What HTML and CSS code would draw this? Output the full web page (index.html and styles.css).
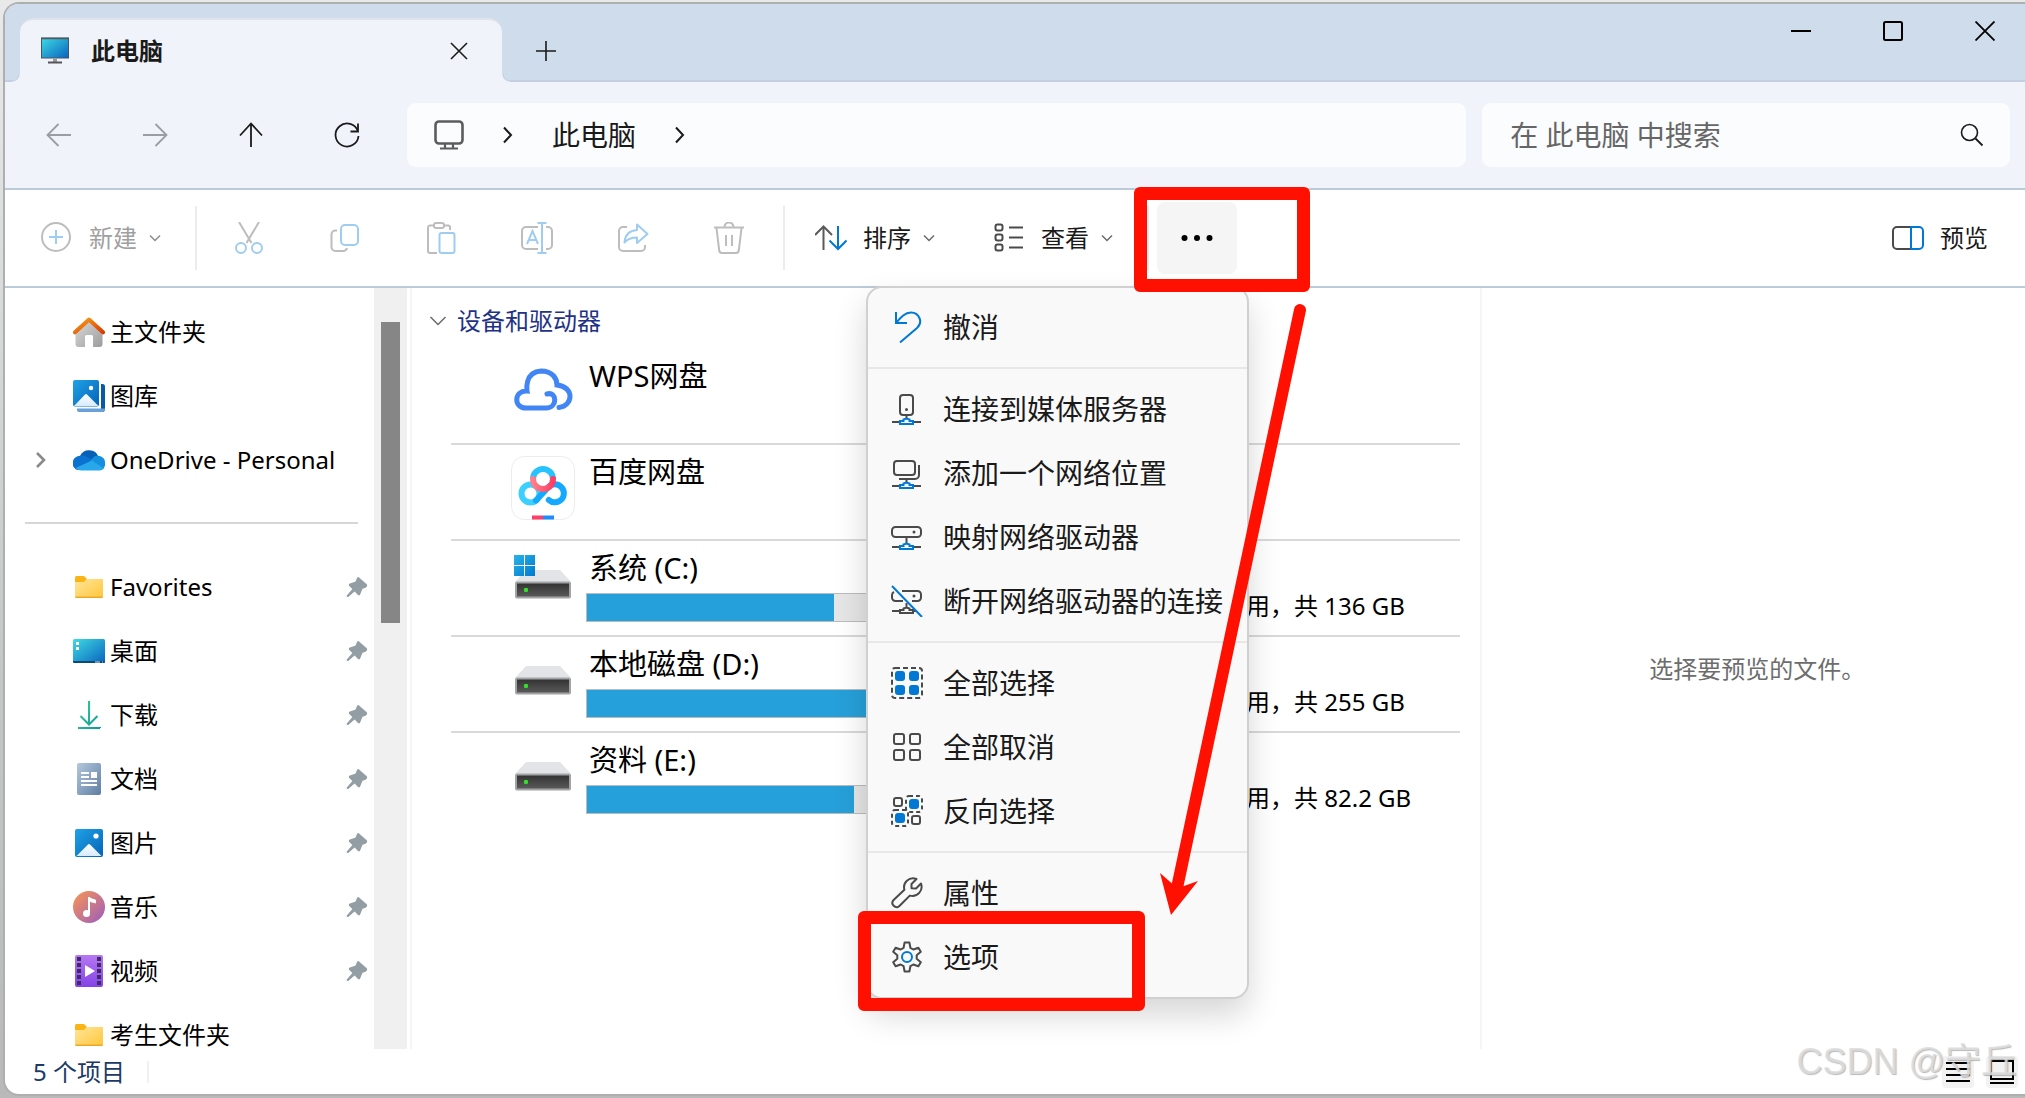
FILE: index.html
```html
<!DOCTYPE html>
<html lang="zh-CN">
<head>
<meta charset="utf-8">
<title>此电脑</title>
<meta name="viewport" content="width=device-width, initial-scale=1">
<link rel="stylesheet" href="styles.css">
</head>
<body>
<svg class="defs" width="0" height="0" aria-hidden="true">
  <defs>
    <linearGradient id="g-screen" x1="0" y1="0" x2="1" y2="1"><stop offset="0" stop-color="#3ddbe4"/><stop offset="1" stop-color="#0a63bd"/></linearGradient>
    <linearGradient id="g-folder" x1="0" y1="0" x2="1" y2="1"><stop offset="0" stop-color="#ffe59a"/><stop offset="1" stop-color="#ffc73a"/></linearGradient>
    <linearGradient id="g-photo" x1="0" y1="0" x2="1" y2="1"><stop offset="0" stop-color="#1fa2e6"/><stop offset="1" stop-color="#0563b8"/></linearGradient>
    <linearGradient id="g-snow" x1="0" y1="0" x2="0" y2="1"><stop offset="0" stop-color="#fff"/><stop offset="1" stop-color="#d6ebff"/></linearGradient>
    <linearGradient id="g-roof" x1="0" y1="0" x2="1" y2="1"><stop offset="0" stop-color="#f9a01b"/><stop offset="1" stop-color="#d83b01"/></linearGradient>
    <linearGradient id="g-wall" x1="0" y1="0" x2="1" y2="1"><stop offset="0" stop-color="#dcdcdc"/><stop offset="1" stop-color="#9c9c9c"/></linearGradient>
    <linearGradient id="g-down" x1="0" y1="0" x2="1" y2="1"><stop offset="0" stop-color="#3ccf91"/><stop offset="1" stop-color="#0c9aa0"/></linearGradient>
    <linearGradient id="g-doc" x1="0" y1="0" x2="1" y2="1"><stop offset="0" stop-color="#b4c8dc"/><stop offset="1" stop-color="#5f7ea4"/></linearGradient>
    <linearGradient id="g-music" x1="0" y1="0" x2="1" y2="1"><stop offset="0.1" stop-color="#f2905c"/><stop offset="1" stop-color="#9a5cc0"/></linearGradient>
    <linearGradient id="g-video" x1="0" y1="0" x2="0" y2="1"><stop offset="0" stop-color="#b678f2"/><stop offset="1" stop-color="#8443e6"/></linearGradient>
    <linearGradient id="g-drive" x1="0" y1="0" x2="0" y2="1"><stop offset="0" stop-color="#303030"/><stop offset="1" stop-color="#5c5c5c"/></linearGradient>
    <linearGradient id="g-pan-c" x1="0" y1="0" x2="1" y2="0"><stop offset="0" stop-color="#ff7f8c"/><stop offset="1" stop-color="#ff3d65"/></linearGradient>
    <linearGradient id="g-win" x1="0" y1="0" x2="1" y2="1"><stop offset="0" stop-color="#28b4ea"/><stop offset="1" stop-color="#0078d0"/></linearGradient>
  </defs>
  <symbol id="pin" viewBox="0 0 22 22"><path d="M12.500 1 21 8.600c.6 1.800-.6 3.200-2.200 3.400l-2.300.8-2.600 6.200c-1 .8-2 .2-2.400-.4l-2.900-3L2.200 21H.8v-1.600l5.600-6.300L3.200 10c-.8-1-.3-2 .6-2.400l5.600-1.800 1.400-3.200C11.200 1.600 11.800 1 12.500 1z" fill="#929da4"/></symbol>
  <symbol id="folder" viewBox="0 0 32 32"><path d="M2 6.500Q2 5 3.500 5H11l3 3-3 4H2z" fill="#fbb416"/><path d="M2 11h9l3-3h16v17.500Q30 27 28.500 27h-25Q2 27 2 25.500z" fill="url(#g-folder)"/><path d="M2.500 26.300h27" stroke="#e8a624" stroke-width="1.400"/></symbol>
  <symbol id="drive" viewBox="0 0 64 48"><path d="M15 18h34l11 12H4z" fill="#e2e4e8"/><rect x="5" y="30.500" width="54" height="15" rx="1" fill="url(#g-drive)" stroke="#a3a3a5" stroke-width="2"/><circle cx="15" cy="38" r="2.200" fill="#35e22b"/></symbol>
  <symbol id="chev-down" viewBox="0 0 12 8"><path d="m1 1.500 5 5 5-5" fill="none" stroke="currentColor" stroke-width="1.500"/></symbol>
  <symbol id="chev-right" viewBox="0 0 12 20"><path d="m2 2.500 7 7.500-7 7.500" fill="none" stroke="currentColor" stroke-width="2"/></symbol>
</svg>

<div class="window">
  <header class="titlebar">
    <div class="tab">
      <svg class="tab-icon" viewBox="0 0 28 28"><rect x=".5" y="1" width="27" height="20" fill="url(#g-screen)" stroke="#4a5560"/><path d="M0 1.500h28" stroke="#51585e" stroke-width="1.500"/><path d="M12 21.500h4v3.500h-4z" fill="#999"/><path d="M7 25.500h14" stroke="#555" stroke-width="2"/></svg>
      <span class="tab-title">此电脑</span>
      <button class="icon-btn tab-close" aria-label="关闭标签页"><svg width="18" height="18" viewBox="0 0 18 18"><path d="m1 1 16 16M17 1 1 17" stroke="#1a1a1a" stroke-width="1.600"/></svg></button>
    </div>
    <button class="icon-btn new-tab" aria-label="新标签页"><svg width="20" height="20" viewBox="0 0 20 20"><path d="M10 0v20M0 10h20" stroke="#1a1a1a" stroke-width="1.600"/></svg></button>
    <div class="caption">
      <button class="icon-btn" aria-label="最小化"><svg width="20" height="20" viewBox="0 0 20 20"><path d="M0 10h20" stroke="#000" stroke-width="2"/></svg></button>
      <button class="icon-btn" aria-label="最大化"><svg width="20" height="20" viewBox="0 0 20 20"><rect x="1" y="1" width="18" height="18" rx="1.500" fill="none" stroke="#000" stroke-width="2"/></svg></button>
      <button class="icon-btn" aria-label="关闭"><svg width="20" height="20" viewBox="0 0 20 20"><path d="m.5.5 19 19M19.500.5l-19 19" stroke="#000" stroke-width="1.800"/></svg></button>
    </div>
  </header>

  <div class="navbar">
    <button class="icon-btn nav-btn muted" aria-label="后退" disabled><svg width="26" height="24" viewBox="0 0 26 24"><path d="M25 12H2M12.500 1 1.500 12l11 11"/></svg></button>
    <button class="icon-btn nav-btn muted" aria-label="前进" disabled><svg width="26" height="24" viewBox="0 0 26 24"><path d="M1 12h23M13.500 1l11 11-11 11"/></svg></button>
    <button class="icon-btn nav-btn" aria-label="向上"><svg width="24" height="26" viewBox="0 0 24 26"><path d="M12 25V2M1 13.500l11-12 11 12"/></svg></button>
    <button class="icon-btn nav-btn" aria-label="刷新"><svg width="26" height="26" viewBox="0 0 26 26"><path d="M24 9.500A11.500 11.500 0 1 0 24.500 14M24 1.500v8h-7.500"/></svg></button>
    <div class="address">
      <svg width="30" height="30" viewBox="0 0 30 30"><rect x="1.500" y="1.500" width="27" height="22" rx="3.500" fill="none" stroke="#5c5c5c" stroke-width="2.600"/><path d="M11 24v4M19 24v4M6 28.500h18" stroke="#5c5c5c" stroke-width="2.200"/></svg>
      <svg class="crumb-chev" width="12" height="20"><use href="#chev-right"/></svg>
      <span>此电脑</span>
      <svg class="crumb-chev" width="12" height="20"><use href="#chev-right"/></svg>
    </div>
    <div class="search">
      <input type="text" placeholder="在 此电脑 中搜索" aria-label="在 此电脑 中搜索">
      <svg width="24" height="24" viewBox="0 0 24 24"><circle cx="9.500" cy="9.500" r="8" fill="none" stroke="#1a1a1a" stroke-width="1.600"/><path d="m15.500 15.500 7 7" stroke="#1a1a1a" stroke-width="1.800"/></svg>
    </div>
  </div>

  <div class="toolbar">
    <button class="tool tool-labeled tool-off" disabled>
      <svg class="ico" viewBox="0 0 32 32"><circle cx="15" cy="15" r="14" stroke="#bdbdbd"/><path d="M15 8v14M8 15h14" stroke="#9fcdf1"/></svg>
      <span>新建</span><svg class="caret" viewBox="0 0 12 8"><use href="#chev-down"/></svg>
    </button>
    <span class="divider"></span>
    <div class="tool-group">
      <button class="tool tool-icon" aria-label="剪切" disabled><svg class="ico" viewBox="0 0 32 32"><path d="m6 0 12.500 21M26 0 13.500 21" stroke="#bdbdbd"/><circle cx="8" cy="26" r="5" stroke="#9fcdf1"/><circle cx="24" cy="26" r="5" stroke="#9fcdf1"/></svg></button>
      <button class="tool tool-icon" aria-label="复制" disabled><svg class="ico" viewBox="0 0 32 32"><path d="M8 8.500H6.500a4 4 0 0 0-4 4V25a4 4 0 0 0 4 4H14a4 4 0 0 0 4-3" stroke="#bdbdbd"/><rect x="12" y="3" width="17" height="20" rx="4" stroke="#9fcdf1"/></svg></button>
      <button class="tool tool-icon" aria-label="粘贴" disabled><svg class="ico" viewBox="0 0 32 32"><path d="M8.500 3.500H5a2 2 0 0 0-2 2V29a2 2 0 0 0 2 2h7M19.500 3.500H23a2 2 0 0 1 2 2V8" stroke="#bdbdbd"/><rect x="9" y="1" width="10" height="5" rx="2" stroke="#bdbdbd"/><rect x="14.500" y="11" width="15" height="20" rx="2" stroke="#9fcdf1"/></svg></button>
      <button class="tool tool-icon" aria-label="重命名" disabled><svg class="ico" viewBox="0 0 32 32"><path d="M17 5H5a4 4 0 0 0-4 4v14a4 4 0 0 0 4 4h12M25 5h2a4 4 0 0 1 4 4v14a4 4 0 0 1-4 4h-2" stroke="#bdbdbd"/><path d="M21 1v30M16.500 1h9M16.500 31h9M6 22l5.500-13L17 22M8 18h7" stroke="#9fcdf1"/></svg></button>
      <button class="tool tool-icon" aria-label="共享" disabled><svg class="ico" viewBox="0 0 32 32"><path d="M10 5H6a4 4 0 0 0-4 4v16a4 4 0 0 0 4 4h18a4 4 0 0 0 4-4v-2" stroke="#bdbdbd"/><path d="m20 2.500 10.500 9.500L20 21v-5.500c-6 0-9.500 1.500-12.500 5C8 13 12.500 8.500 20 8z" stroke="#9fcdf1" stroke-linejoin="round"/></svg></button>
      <button class="tool tool-icon" aria-label="删除" disabled><svg class="ico" viewBox="0 0 32 32"><path d="M1 5.500h30M11.500 5a4.500 4.500 0 0 1 9 0M3.500 6l2.700 22.500A3 3 0 0 0 9 31h14a3 3 0 0 0 2.800-2.500L28.500 6M13 13v11M19 13v11" stroke="#bdbdbd"/></svg></button>
    </div>
    <span class="divider"></span>
    <div class="tool-group tool-group-wide">
      <button class="tool tool-labeled">
        <svg class="ico" viewBox="0 0 32 32"><path d="M8.500 28V5M0 13 8.500 4.500 17 13" stroke="#5a5a5a"/><path d="M23 4v23M14.500 18.500 23 27l8.500-8.500" stroke="#0078d4"/></svg>
        <span>排序</span><svg class="caret" viewBox="0 0 12 8"><use href="#chev-down"/></svg>
      </button>
      <button class="tool tool-labeled">
        <svg class="ico" viewBox="0 0 32 32"><g stroke="#4a4a4a"><rect x="2.500" y="2.500" width="7" height="6" rx="2"/><rect x="2.500" y="12.500" width="7" height="6" rx="2"/><rect x="2.500" y="22.500" width="7" height="6" rx="2"/><path d="M16 5.500h14M16 15.500h14M16 25.500h14"/></g></svg>
        <span>查看</span><svg class="caret" viewBox="0 0 12 8"><use href="#chev-down"/></svg>
      </button>
    </div>
    <span class="divider divider-near"></span>
    <button class="tool more" aria-label="查看更多" aria-expanded="true"><svg width="32" height="8" viewBox="0 0 32 8"><circle cx="3.500" cy="4" r="3"/><circle cx="16" cy="4" r="3"/><circle cx="28.500" cy="4" r="3"/></svg></button>
    <button class="tool preview-btn">
      <svg class="ico" viewBox="0 0 32 32"><path d="M19 5H5a4 4 0 0 0-4 4v14a4 4 0 0 0 4 4h14" stroke="#4a4a4a"/><path d="M19 5h8a4 4 0 0 1 4 4v14a4 4 0 0 1-4 4h-8z" stroke="#0078d4"/></svg>
      <span>预览</span>
    </button>
  </div>

  <div class="body">
    <nav class="sidebar">
      <div class="tree">
        <a class="node" href="#home"><span class="twist"></span><svg class="node-icon" viewBox="0 0 32 32"><path d="M2.500 13 16 3l13.500 10v15a3 3 0 0 1-3 3H20V20.500a1.500 1.500 0 0 0-1.500-1.500h-5a1.500 1.500 0 0 0-1.500 1.500V31H5.500a3 3 0 0 1-3-3z" fill="url(#g-wall)"/><path d="M2 16.300 16 3.500l14 12.800" fill="none" stroke="url(#g-roof)" stroke-width="4" stroke-linecap="round" stroke-linejoin="round"/></svg><span class="node-label">主文件夹</span></a>
        <a class="node" href="#gallery"><span class="twist"></span><svg class="node-icon" viewBox="0 0 32 32"><path d="M28 4h1.500A2.500 2.500 0 0 1 32 6.500V29a3 3 0 0 1-3 3h-1z" fill="#0a59a8"/><path d="M4 28.500h28a3 3 0 0 1-3 3.500H6a2 2 0 0 1-2-2z" fill="#69a0d8"/><rect width="26" height="26.500" rx="2" fill="url(#g-photo)"/><path d="m1 26 11-11.500a1.500 1.500 0 0 1 2 0L25.500 26z" fill="url(#g-snow)"/><circle cx="18" cy="8" r="2.200" fill="#fff"/></svg><span class="node-label">图库</span></a>
        <a class="node" href="#onedrive"><span class="twist"><svg width="12" height="20" viewBox="0 0 12 20"><path d="m2 3 7 7-7 7" fill="none" stroke="#8a8a8a" stroke-width="2.600"/></svg></span><svg class="node-icon" viewBox="0 0 32 32"><path d="M7 12A10 10 0 0 1 25.500 13L20 20z" fill="#0560b6"/><path d="M12 11.500 24 19 5 26.300A7.400 7.400 0 0 1 7.200 11.800 9 9 0 0 1 12 11.500z" fill="#0a72cf"/><path d="M18.500 15.500A7.200 7.200 0 0 1 32 19.500a6.500 6.500 0 0 1-2 5.500L17 17z" fill="#1490df"/><path d="M2.500 24 19 16.500l12 8A6 6 0 0 1 26 26.500H8A8 8 0 0 1 2.500 24z" fill="#28a8ea"/></svg><span class="node-label">OneDrive - Personal</span></a>
        <hr class="tree-rule">
        <a class="node" href="#favorites"><span class="twist"></span><svg class="node-icon"><use href="#folder"/></svg><span class="node-label">Favorites</span><svg class="pin"><use href="#pin"/></svg></a>
        <a class="node" href="#desktop"><span class="twist"></span><svg class="node-icon" viewBox="0 0 32 32"><rect y="4" width="32" height="24" rx="1.500" fill="url(#g-screen)"/><path d="M0 26h32v.5a1.500 1.500 0 0 1-1.500 1.500h-29A1.500 1.500 0 0 1 0 26.500z" fill="#0a4a78"/><path d="M3 7h3v3H3zM3 12h3v3H3z" fill="#fff"/><path d="M22 27h5M29 27h1" stroke="#cfe6f5" stroke-width="1.200"/></svg><span class="node-label">桌面</span><svg class="pin"><use href="#pin"/></svg></a>
        <a class="node" href="#downloads"><span class="twist"></span><svg class="node-icon" viewBox="0 0 32 32" fill="none" stroke="url(#g-down)" stroke-width="2"><path d="M16 2v23.500L16.100 2M7.500 17l8.500 8.500 8.500-8.500M5 29h22v.1"/></svg><span class="node-label">下载</span><svg class="pin"><use href="#pin"/></svg></a>
        <a class="node" href="#documents"><span class="twist"></span><svg class="node-icon" viewBox="0 0 32 32"><rect x="4" width="24" height="32" rx="2" fill="url(#g-doc)"/><path d="M8 10h8M8 14h8M8 18h16M8 22h16" stroke="#fff" stroke-width="2"/><path d="M18 9h6v6h-6z" fill="#fff"/></svg><span class="node-label">文档</span><svg class="pin"><use href="#pin"/></svg></a>
        <a class="node" href="#pictures"><span class="twist"></span><svg class="node-icon" viewBox="0 0 32 32"><rect x="2" y="2" width="28" height="28" rx="2" fill="url(#g-photo)"/><path d="m3.500 29 11.500-11.500a1.500 1.500 0 0 1 2 0L28.500 29z" fill="url(#g-snow)"/><circle cx="23" cy="9" r="2.600" fill="#fff"/></svg><span class="node-label">图片</span><svg class="pin"><use href="#pin"/></svg></a>
        <a class="node" href="#music"><span class="twist"></span><svg class="node-icon" viewBox="0 0 32 32"><circle cx="16" cy="16" r="16" fill="url(#g-music)"/><circle cx="13.500" cy="22.500" r="3.500" fill="#fff"/><path d="M16 6v16.500" stroke="#fff" stroke-width="2"/><path d="M15 6h1.500c1.500 2 5 1.500 6.500 3v3.500c-2-1-4.500-.5-6-2z" fill="#fff"/></svg><span class="node-label">音乐</span><svg class="pin"><use href="#pin"/></svg></a>
        <a class="node" href="#videos"><span class="twist"></span><svg class="node-icon" viewBox="0 0 32 32"><rect x="2" width="28" height="32" rx="2" fill="url(#g-video)"/><path d="M6 2v30M26 2v30" stroke="#402a66" stroke-width="4" stroke-dasharray="4 2"/><path d="m12 10 10 6-10 6z" fill="#fff"/></svg><span class="node-label">视频</span><svg class="pin"><use href="#pin"/></svg></a>
        <a class="node" href="#exam"><span class="twist"></span><svg class="node-icon"><use href="#folder"/></svg><span class="node-label">考生文件夹</span></a>
      </div>
      <div class="scroll"><div class="thumb"></div></div>
    </nav>

    <main class="content">
      <h2 class="group"><svg width="18" height="12" viewBox="0 0 18 12"><path d="m1.500 2 7.500 7.500L16.500 2" fill="none" stroke="#6a6a6a" stroke-width="1.500"/></svg>设备和驱动器</h2>
      <ul class="devices">
        <li class="device">
          <svg class="device-icon" viewBox="0 0 64 64" fill="none" stroke="#4285f4" stroke-width="5" stroke-linecap="round"><path d="M36 34c10-3 11 14-1 14H15C2 48 3 30 16 31c0 0-3-19 14-20 12 0 16 8 16 14 18 2 16 21 2 22.500"/></svg>
          <div class="device-main"><span class="device-name">WPS网盘</span></div>
        </li>
        <li class="device">
          <svg class="device-icon" viewBox="0 0 64 64" fill="none"><rect x=".5" y=".5" width="63" height="63" rx="13" stroke="#ececec"/><g stroke-width="6"><path d="M22 23a10 10 0 0 1 20 0" stroke="#27c3ff"/><circle cx="19.500" cy="37.500" r="9" stroke="#3dd0ff"/><path d="M25 44.500 37.500 31A9 9 0 1 1 37.800 44" stroke="#15a8ff" stroke-linecap="round"/><path d="M22 23a10 10 0 0 0 20 0" stroke="url(#g-pan-c)" stroke-linecap="round"/></g><path d="M21 61.500h11" stroke="#ff3f68" stroke-width="4"/><path d="M32 61.500h11" stroke="#1c8cff" stroke-width="4"/></svg>
          <div class="device-main"><span class="device-name">百度网盘</span></div>
        </li>
        <li class="device">
          <svg class="device-icon" viewBox="0 0 64 64"><use href="#drive" width="64" height="48"/><path d="M3 3h10v10H3zM14 3h10v10H14zM3 14h10v10H3zM14 14h10v10H14z" fill="url(#g-win)"/></svg>
          <div class="device-main"><span class="device-name">系统 (C:)</span><div class="meter" role="progressbar" aria-label="系统 (C:)" aria-valuenow="62"><div class="fill" style="width:62%"></div></div></div>
          <span class="capacity">可用，共 136 GB</span>
        </li>
        <li class="device">
          <svg class="device-icon" viewBox="0 0 64 64"><use href="#drive" width="64" height="48"/></svg>
          <div class="device-main"><span class="device-name">本地磁盘 (D:)</span><div class="meter" role="progressbar" aria-label="本地磁盘 (D:)" aria-valuenow="75"><div class="fill" style="width:75%"></div></div></div>
          <span class="capacity">可用，共 255 GB</span>
        </li>
        <li class="device">
          <svg class="device-icon" viewBox="0 0 64 64"><use href="#drive" width="64" height="48"/></svg>
          <div class="device-main"><span class="device-name">资料 (E:)</span><div class="meter" role="progressbar" aria-label="资料 (E:)" aria-valuenow="67"><div class="fill" style="width:67%"></div></div></div>
          <span class="capacity">可用，共 82.2 GB</span>
        </li>
      </ul>
    </main>

    <aside class="preview"><p>选择要预览的文件。</p></aside>
  </div>

  <footer class="status">
    <span class="count">5 个项目</span>
    <div class="view-modes">
      <button class="icon-btn view-mode" aria-label="详细信息"><svg width="24" height="24" viewBox="0 0 24 24"><path d="M0 3h24M0 9h24M0 15h24M0 21h24" stroke="#000" stroke-width="2"/></svg></button>
      <button class="icon-btn view-mode" aria-label="大图标"><svg width="24" height="24" viewBox="0 0 24 24"><path d="M1 1h22v18H1zM0 23h24" fill="none" stroke="#000" stroke-width="2"/></svg></button>
    </div>
  </footer>

  <div class="menu" role="menu">
    <button class="menu-item" role="menuitem"><svg class="ico" viewBox="0 0 32 32"><path d="M5 1v11h11M5.500 11.500C10 6 14 1.500 20 1.500c8 0 12.500 9.500 6 15.500L9 31.500" stroke="#0078d4"/></svg>撤消</button>
    <hr>
    <button class="menu-item" role="menuitem"><svg class="ico" viewBox="0 0 32 32"><rect x="9" y="2" width="13" height="20" rx="3" stroke="#4a4a4a"/><circle cx="15.500" cy="16.500" r="1.500" fill="#4a4a4a" stroke="none"/><path d="M1 29h7M22 29h8M15.500 22v3" stroke="#4a4a4a"/><path d="M9 28h3.500v-1.500l3-1 3 1V28H22v3H9z" stroke="#0078d4"/></svg>连接到媒体服务器</button>
    <button class="menu-item" role="menuitem"><svg class="ico" viewBox="0 0 32 32"><rect x="3" y="4" width="21" height="14" rx="3" stroke="#4a4a4a"/><path d="M28 8v10a4 4 0 0 1-4 4H8M1 29h7M22 29h8M15.500 22v3" stroke="#4a4a4a"/><path d="M9 28h3.500v-1.500l3-1 3 1V28H22v3H9z" stroke="#0078d4"/></svg>添加一个网络位置</button>
    <button class="menu-item" role="menuitem"><svg class="ico" viewBox="0 0 32 32"><rect x="1" y="6" width="29" height="10" rx="3.500" stroke="#4a4a4a"/><circle cx="23" cy="11" r="1.500" fill="#4a4a4a" stroke="none"/><path d="M1 26h7M22 26h8M15.500 16v6" stroke="#4a4a4a"/><path d="M9 25h3.500v-1.500l3-1 3 1V25H22v3H9z" stroke="#0078d4"/></svg>映射网络驱动器</button>
    <button class="menu-item" role="menuitem"><svg class="ico" viewBox="0 0 32 32"><path d="M11 6h15.500A3.500 3.500 0 0 1 30 9.500v3a3.500 3.500 0 0 1-3.500 3.500H21M3 7a3.500 3.500 0 0 0-2 3v2.500A3.500 3.500 0 0 0 4.500 16H12M1 26h7M22 26h3M15.500 18v4M9 25h3.500v-1.500l3-1 3 1V25H22v3H9z" stroke="#4a4a4a"/><circle cx="23" cy="11" r="1.500" fill="#4a4a4a" stroke="none"/><path d="m1 1 30 31" stroke="#0078d4"/></svg>断开网络驱动器的连接</button>
    <hr>
    <button class="menu-item" role="menuitem"><svg class="ico" viewBox="0 0 32 32"><rect x="1" y="1" width="30" height="30" rx="3" stroke="#4a4a4a" stroke-dasharray="5 3"/><g fill="#0078d4" stroke="none"><rect x="4" y="4" width="10" height="10" rx="3"/><rect x="18" y="4" width="10" height="10" rx="3"/><rect x="4" y="18" width="10" height="10" rx="3"/><rect x="18" y="18" width="10" height="10" rx="3"/></g></svg>全部选择</button>
    <button class="menu-item" role="menuitem"><svg class="ico" viewBox="0 0 32 32" stroke="#4a4a4a"><rect x="3" y="3" width="10" height="10" rx="2"/><rect x="19" y="3" width="10" height="10" rx="2"/><rect x="3" y="19" width="10" height="10" rx="2"/><rect x="19" y="19" width="10" height="10" rx="2"/></svg>全部取消</button>
    <button class="menu-item" role="menuitem"><svg class="ico" viewBox="0 0 32 32" stroke="#4a4a4a"><rect x="3" y="3" width="8" height="8" rx="2"/><rect x="21" y="21" width="8" height="8" rx="2"/><rect x="15" y="1" width="16" height="16" rx="3" stroke-dasharray="4 3"/><rect x="1" y="15" width="16" height="16" rx="3" stroke-dasharray="4 3"/><g fill="#0078d4" stroke="none"><rect x="18" y="4" width="10" height="10" rx="3"/><rect x="4" y="18" width="10" height="10" rx="3"/></g></svg>反向选择</button>
    <hr>
    <button class="menu-item" role="menuitem"><svg class="ico" viewBox="0 0 32 32"><path d="M25.500 2C18-.5 11.500 5.500 13.400 12.800L2.600 23C-1 27 4.500 32.500 8.400 29l10.400-10.400C26.500 20.500 32.500 13.500 30 6.500L25 11.500 20.500 11.200 20.500 7z" stroke="#4a4a4a" stroke-linejoin="round"/></svg>属性</button>
    <button class="menu-item" role="menuitem"><svg class="ico" viewBox="0 0 32 32"><path d="M12.600 6.800 13.600 1.500H18.400L19.400 6.800 22.300 8.500 27.400 6.700 29.800 10.800 25.700 14.300V17.700L29.800 21.200 27.400 25.300 22.300 23.500 19.400 25.200 18.400 30.500H13.600L12.600 25.200 9.700 23.500 4.600 25.300 2.200 21.200 6.300 17.700V14.300L2.200 10.800 4.600 6.700 9.700 8.500z" stroke="#4a4a4a" stroke-linejoin="round"/><circle cx="16" cy="16" r="5" stroke="#0078d4"/></svg>选项</button>
  </div>

  <div class="mark mark-more"></div>
  <div class="mark mark-options"></div>
  <svg class="arrow" width="160" height="620" viewBox="0 0 160 620" aria-hidden="true"><path d="M146 10 23 588" stroke="#ff1000" stroke-width="12" stroke-linecap="round"/><path d="M6 573l12 10.500 12 2.500 14-5-27 34z" fill="#ff1000"/></svg>
  <div class="watermark">CSDN @守丘</div>
</div>
</body>
</html>
```
FILE: styles.css
```css
* { box-sizing: border-box; }

html, body { height: 100%; }

body {
  margin: 0;
  padding: 2px 0 2px 3px;
  overflow: hidden;
  background: linear-gradient(#e9e9e9, #c6c8c8 60%, #b9b9b9);
  color: #000;
  font: 24px/32px "Noto Sans", "Noto Sans CJK SC", sans-serif;
}

button, input { font: inherit; color: inherit; }

button {
  display: flex;
  align-items: center;
  margin: 0;
  padding: 0;
  border: 0;
  background: none;
}

svg { display: block; flex: none; }
.defs { position: absolute; }

.window {
  position: relative;
  display: flex;
  flex-direction: column;
  height: 100%;
  border: 2px solid #aeb0b0;
  border-right: 0;
  border-radius: 16px 0 0 16px;
  background: #fff;
}

/* Title bar */
.titlebar {
  display: flex;
  align-items: flex-end;
  height: 78px;
  padding-left: 15px;
  border-top-left-radius: 14px;
  background: #cfdceb;
  box-shadow: inset 0 -2px #c3cfe0;
}

.tab {
  position: relative;
  display: flex;
  align-items: center;
  width: 482px;
  height: 64px;
  padding: 0 34px 0 21px;
  border-top: 2px solid #e0e4ea;
  border-radius: 14px 14px 0 0;
  background: #f0f4fa;
}

.tab::before, .tab::after {
  content: "";
  position: absolute;
  bottom: 0;
  width: 8px;
  height: 8px;
}
.tab::before { left: -8px; background: radial-gradient(circle at 0 0, #cfdceb 6px, #c3cfe0 7px, #f0f4fa 8px); }
.tab::after { right: -8px; background: radial-gradient(circle at 100% 0, #cfdceb 6px, #c3cfe0 7px, #f0f4fa 8px); }

.tab-icon { width: 28px; height: 28px; }
.tab-title { margin-left: 22px; font-weight: 700; color: #1a1a1a; }
.tab-close { margin-left: auto; }

.icon-btn { justify-content: center; flex: none; }

.new-tab { align-self: center; width: 88px; height: 64px; padding-top: 16px; }

.caption { display: flex; align-self: flex-start; margin-left: auto; }
.caption .icon-btn { width: 92px; height: 54px; }
.caption .icon-btn:last-child { width: 86px; padding-left: 6px; }

/* Navigation row */
.navbar {
  display: flex;
  align-items: center;
  height: 108px;
  padding: 0 15px 0 6px;
  border-bottom: 2px solid #bccbd8;
  background: #f0f4fa;
}

.nav-btn { width: 96px; height: 64px; }
.nav-btn svg { fill: none; stroke: #1a1a1a; stroke-width: 1.8; }
.nav-btn.muted svg { stroke: #9a9da1; }

.address {
  display: flex;
  align-items: center;
  flex: 1;
  height: 64px;
  margin: 0 16px 0 12px;
  padding-left: 27px;
  border-radius: 9px;
  background: #fbfcfe;
  color: #1a1a1a;
  font-size: 28px;
}
.crumb-chev { margin: 0 38px; }

.search {
  display: flex;
  align-items: center;
  width: 26.4%;
  height: 64px;
  padding: 0 26px 0 28px;
  border-radius: 9px;
  background: #fbfcfe;
}
.search input {
  flex: 1;
  min-width: 0;
  padding: 0;
  border: 0;
  outline: 0;
  background: none;
  font-size: 28px;
}
.search input::placeholder { color: #666; opacity: 1; }

/* Command bar */
.toolbar {
  display: flex;
  align-items: center;
  height: 98px;
  padding: 0 37px 0 22px;
  border-bottom: 2px solid #bccbd8;
  color: #1a1a1a;
}

.ico { width: 32px; height: 32px; fill: none; stroke-width: 2; }
.caret { width: 12px; height: 8px; margin-left: 12px; color: #6a6a6a; }
.tool { height: 72px; }
.tool .ico + span { margin-left: 16px; }
.tool-labeled { padding: 0 16px 0 14px; }
.tool-off { color: #a0a0a0; }
.tool-off .caret { color: #8c8c8c; }
.tool-icon { justify-content: center; width: 72px; }
.tool-group { display: flex; gap: 24px; }
.tool-group-wide { gap: 28px; }
.divider { width: 2px; height: 64px; margin: 0 16px 0 18px; background: #ececec; }
.divider-near { margin-right: 8px; }
.more { justify-content: center; width: 80px; border-radius: 8px; background: #f5f5f5; }
.preview-btn { margin-left: auto; }

/* Body */
.body { display: flex; flex: 1; min-height: 0; }

.sidebar {
  display: flex;
  flex: none;
  width: 407px;
  padding-right: 3px;
  border-right: 2px solid #f5f5f5;
}
.tree { flex: 1; min-width: 0; padding-top: 12px; }

.node {
  display: flex;
  align-items: center;
  height: 64px;
  padding: 0 6px 0 30px;
  color: #000;
  text-decoration: none;
  white-space: nowrap;
}
.twist { width: 38px; flex: none; }
.node-icon { width: 32px; height: 32px; }
.node-label { flex: 1; margin-left: 5px; }
.pin { width: 22px; height: 22px; }
.tree-rule { height: 2px; margin: 30px 16px 31px 20px; border: 0; background: #d6d6d6; }

.scroll { width: 33px; padding: 34px 7px 0; background: #f0f0f0; }
.thumb { height: 301px; background: #868686; }

.content { flex: 1; min-width: 0; }

.group {
  display: flex;
  align-items: center;
  gap: 10px;
  height: 61px;
  margin: 0;
  padding: 5px 0 0 17px;
  color: #1e3287;
  font-size: 24px;
  font-weight: 400;
}

.devices { margin: 0 20px 0 39px; padding: 0; list-style: none; }

.device {
  display: flex;
  height: 96px;
  padding: 11px 0 0 60px;
  border-bottom: 2px solid #d9d9d9;
  white-space: nowrap;
}
.device:last-child { border-bottom: 0; }
.device-icon { width: 64px; height: 64px; margin-right: 11px; }
.device-main { flex: 0 1 636px; }
.device-name { display: block; padding-left: 3px; font-size: 29px; }

.meter {
  width: 400px;
  height: 29px;
  margin-top: 9px;
  border: 1px solid #bcbcbc;
  background: #e6e6e6;
}
.fill { height: 100%; background: #26a0da; }
.capacity { align-self: flex-start; margin-top: 38px; }

.preview {
  display: flex;
  align-items: center;
  justify-content: center;
  width: 27%;
  padding-left: 8px;
  border-left: 2px solid #f5f5f5;
  color: #6d6d6d;
}
.preview p { margin: 0; }

/* Status bar */
.status {
  display: flex;
  align-items: center;
  height: 45px;
  padding: 0 7px 0 28px;
  color: #1b3a66;
}
.count { padding-right: 22px; line-height: 22px; border-right: 2px solid #f0f0f0; }
.view-modes { display: flex; gap: 12px; margin-left: auto; }
.view-mode { width: 32px; height: 32px; border-radius: 4px; background: #f2f2f2; }

/* Overflow menu */
.menu {
  position: absolute;
  top: 282px;
  left: 861px;
  width: 383px;
  padding: 7px 0 8px;
  border: 2px solid #d0d0d0;
  border-radius: 16px;
  background: #f9f9f9;
  box-shadow: 0 16px 32px rgba(0, 0, 0, .16);
}
.menu-item {
  gap: 20px;
  width: 100%;
  height: 64px;
  padding-left: 23px;
  color: #1a1a1a;
  font-size: 28px;
  white-space: nowrap;
}
.menu hr { height: 2px; margin: 8px 0; border: 0; background: #e8e8e8; }

/* Annotations */
.mark { position: absolute; border: 13px solid #ff1000; border-radius: 6px; }
.mark-more { top: 183px; left: 1129px; width: 176px; height: 105px; }
.mark-options { top: 907px; left: 853px; width: 287px; height: 100px; }
.arrow { position: absolute; top: 296px; left: 1149px; fill: none; }

.watermark {
  position: absolute;
  right: 8px;
  bottom: 8px;
  color: rgba(222, 222, 222, .85);
  font: 36px/48px "Liberation Sans", "Noto Sans CJK SC", sans-serif;
  text-shadow: 1px 1px 1px rgba(140, 140, 140, .6);
}
```
